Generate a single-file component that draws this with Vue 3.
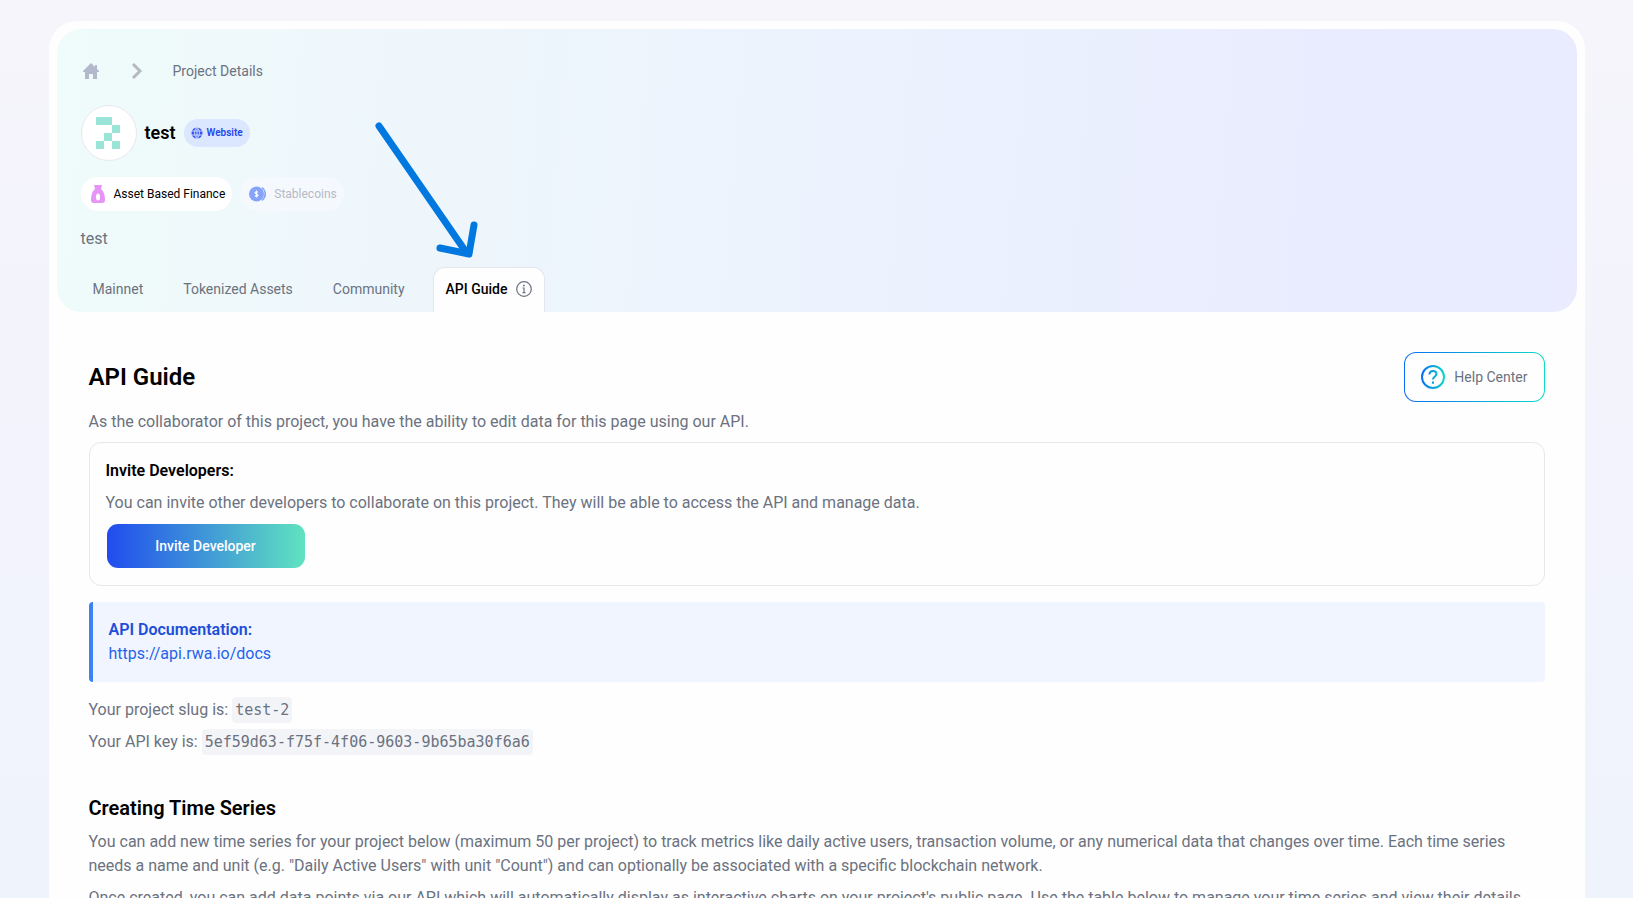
<template>
  <div class="page">
    <main class="card">
      <header class="hero">
        <nav class="breadcrumb" aria-label="Breadcrumb">
          <a href="#" class="home" aria-label="Home">
            <svg width="16" height="16" viewBox="0 0 16 16" fill="#b4b8cc">
              <path d="M8 0 0 8v1h2v7h4v-5h4v5h4V9h2V8l-2-2V2h-2v2z" />
            </svg>
          </a>
          <svg class="chevron" width="16" height="16" viewBox="0 0 16 16" fill="none" stroke="#b6babf" stroke-width="3">
            <path d="m5 1 7 7-7 7" />
          </svg>
          <span>Project Details</span>
        </nav>

        <div class="project">
          <div class="avatar">
            <svg width="26" height="32" viewBox="0 0 26 32" fill="#99e6d8">
              <path d="M0 0h16v8H0zM16 8h8v8h-8zM8 16h8v8H8zM0 24h8v8H0zM16 24h8v8h-8z" />
            </svg>
          </div>
          <h1>{{ project.name }}</h1>
          <a href="#" class="website">
            <svg width="12" height="12" viewBox="0 0 12 12">
              <circle cx="6" cy="6" r="5.500" fill="#3454f0" />
              <path d="M.5 4h11M.5 8h11M6 0v12M6 .5C2.800 3 2.800 9 6 11.500M6 .5c3.200 2.500 3.200 8.500 0 11" fill="none" stroke="#dbe6ff" stroke-width=".9" />
            </svg>
            Website
          </a>
        </div>

        <div class="chips">
          <span class="chip">
            <svg width="16" height="18" viewBox="0 0 16 18">
              <path d="M4 0h8l-1 4 1 1c2 2 3 6 3 10 0 2-1 3-3 3H4c-2 0-3-1-3-3 0-4 1-8 3-10l1-1z" fill="#e694f8" />
              <ellipse cx="8" cy="12" rx="2" ry="3.500" fill="#fff" />
            </svg>
            Asset Based Finance
          </span>
          <span class="chip muted">
            <svg width="17" height="16" viewBox="0 0 17 16">
              <circle cx="7.500" cy="8" r="7.500" fill="#3b6cf6" />
              <path d="M13 1.500c4 3 4 10 0 13M14.500 3c2.500 3 2.500 7 0 10" fill="none" stroke="#3b6cf6" stroke-width="1.200" />
              <path d="M9 6.500c-.5-1-3-1-3 .3s3 1 3 2.400-2.500 1.500-3 .3M7.500 4.500v7" fill="none" stroke="#fff" stroke-width="1.100" />
            </svg>
            Stablecoins
          </span>
        </div>

        <p class="summary">{{ project.description }}</p>

        <nav class="tabs">
          <a v-for="tab in tabs" :key="tab" href="#" class="tab" :class="{ active: tab === activeTab }" @click.prevent="activeTab = tab">
            {{ tab }}
            <svg v-if="tab === 'API Guide'" width="16" height="16" viewBox="0 0 16 16" fill="none" stroke="#6b7280">
              <circle cx="8" cy="8" r="7.300" stroke-width="1.200" />
              <path d="M6.500 7H8v4.500M6.500 11.600h3" stroke-width="1.200" />
              <circle cx="7.900" cy="4.500" r=".9" fill="#6b7280" stroke="none" />
            </svg>
          </a>
        </nav>

        <svg class="pointer" width="104" height="140" viewBox="0 0 104 140" fill="none" stroke="#0078df" stroke-linecap="round" stroke-linejoin="round">
          <path d="m5 5 87 126" stroke-width="7" />
          <path d="m66 127 29 6 5-29" stroke-width="7" />
        </svg>
      </header>

      <section class="content">
        <div class="heading">
          <h2>API Guide</h2>
          <button type="button" class="help">
            <svg width="24" height="24" viewBox="0 0 24 24" fill="none" stroke="url(#helpStroke)" stroke-width="2">
              <defs>
                <linearGradient id="helpStroke" gradientUnits="userSpaceOnUse" x1="0" y1="0" x2="24" y2="0">
                  <stop offset="0" stop-color="#0a6cf5" />
                  <stop offset="1" stop-color="#0bdcc4" />
                </linearGradient>
              </defs>
              <circle cx="12" cy="12" r="11" />
              <path d="M8.500 9.500c0-5 7-4.500 7-.5 0 2.500-3.500 2.500-3.500 5.500M12 16.500v2.200" />
            </svg>
            Help Center
          </button>
        </div>
        <p>As the collaborator of this project, you have the ability to edit data for this page using our API.</p>

        <div class="invite">
          <h4>Invite Developers:</h4>
          <p>You can invite other developers to collaborate on this project. They will be able to access the API and manage data.</p>
          <button type="button" class="invite-btn">Invite Developer</button>
        </div>

        <div class="docs">
          <h4>API Documentation:</h4>
          <a href="https://api.rwa.io/docs">https://api.rwa.io/docs</a>
        </div>

        <p class="key">Your project slug is: <code>{{ project.slug }}</code></p>
        <p class="key">Your API key is: <code>{{ project.apiKey }}</code></p>

        <h3>Creating Time Series</h3>
        <p>You can add new time series for your project below (maximum 50 per project) to track metrics like daily active users, transaction volume, or any numerical data that changes over time. Each time series needs a name and unit (e.g. "Daily Active Users" with unit "Count") and can optionally be associated with a specific blockchain network.</p>
        <p class="more">Once created, you can add data points via our API which will automatically display as interactive charts on your project's public page. Use the table below to manage your time series and view their details.</p>
      </section>
    </main>
  </div>
</template>

<script setup>
import { ref } from 'vue';

const project = ref({
  name: 'test',
  description: 'test',
  slug: 'test-2',
  apiKey: '5ef59d63-f75f-4f06-9603-9b65ba30f6a6'
});

const tabs = ['Mainnet', 'Tokenized Assets', 'Community', 'API Guide'];
const activeTab = ref('API Guide');
</script>

<style>
body {
  margin: 0;
}
</style>

<style scoped>
* {
  box-sizing: border-box;
}
.page {
  height: 100vh;
  overflow-y: auto;
  scrollbar-width: none;
  padding: 21px 48px 0;
  background: linear-gradient(180deg, #f6f5fb 0%, #f3f3fd 50%, #eff3fc 100%);
  color: #6b7280;
  font-family: Roboto, "Liberation Sans", sans-serif;
  font-size: 16px;
  line-height: 24px;
}
h1, h2, h3, h4, p {
  margin: 0;
}
a {
  text-decoration: none;
}
svg {
  flex: none;
}
.card {
  max-width: 1536px;
  margin: 0 auto;
  padding: 8px 8px 40px;
  background: #fefefe;
  border-radius: 28px 28px 0 0;
}
.hero {
  position: relative;
  padding: 32px 24px 0;
  border-radius: 24px;
  background: linear-gradient(95deg, #effcfa 0%, #eff8fb 14%, #edf5fc 32%, #ebf1fe 60%, #e9ecfe 85%, #eaebff 100%);
}
.breadcrumb {
  display: flex;
  align-items: center;
  height: 20px;
  padding-left: 2px;
  font-size: 14px;
}
.home {
  display: flex;
}
.chevron {
  margin: 0 29px;
}
.project {
  display: flex;
  align-items: center;
  margin-top: 24px;
}
.avatar {
  display: flex;
  align-items: center;
  justify-content: center;
  width: 56px;
  height: 56px;
  margin-right: 8px;
  border: 1px solid #e8e8f0;
  border-radius: 50%;
  background: #fff;
}
h1 {
  color: #000;
  font-size: 18px;
  font-weight: 600;
}
.website {
  display: flex;
  align-items: center;
  gap: 4px;
  height: 28px;
  margin-left: 8px;
  padding: 0 7px;
  border-radius: 14px;
  background: #dbe6ff;
  color: #2346ea;
  font-size: 10px;
  font-weight: 600;
}
.chips {
  display: flex;
  gap: 8px;
  margin-top: 16px;
}
.chip {
  display: flex;
  align-items: center;
  gap: 8px;
  height: 34px;
  padding: 0 7px 0 9px;
  border-radius: 17px;
  background: #fff;
  color: #000;
  font-size: 12px;
}
.chip.muted {
  background: #f5f9fe;
  color: #b5b9c5;
}
.chip.muted svg {
  opacity: 0.6;
}
.summary {
  margin-top: 16px;
}
.tabs {
  display: flex;
  gap: 16px;
  margin-top: 16px;
}
.tab {
  display: flex;
  align-items: center;
  gap: 8px;
  height: 45px;
  padding: 0 12px 2px;
  color: #6b7280;
  font-size: 14px;
}
.tab.active {
  border: 1px solid #e5e5ee;
  border-bottom: none;
  border-radius: 12px 12px 0 0;
  background: #fefefe;
  color: #000;
  font-weight: 500;
}
.pointer {
  position: absolute;
  top: 92px;
  left: 317px;
}
.content {
  padding: 40px 32px 0;
}
.heading {
  display: flex;
  align-items: center;
  justify-content: space-between;
  margin-bottom: 8px;
}
h2 {
  color: #000;
  font-size: 24px;
  font-weight: 600;
  line-height: 32px;
}
.help {
  display: flex;
  align-items: center;
  gap: 9px;
  height: 50px;
  padding: 0 16px;
  border: 1px solid transparent;
  border-radius: 12px;
  background: linear-gradient(#fefefe, #fefefe) padding-box, linear-gradient(90deg, #0a6cf5, #0bdcc4) border-box;
  color: #6b7280;
  font: 14px Roboto, "Liberation Sans", sans-serif;
}
.invite {
  margin: 8px 0 16px;
  padding: 16px;
  border: 1px solid #e5e7eb;
  border-radius: 12px;
}
h4 {
  color: #000;
  font-size: 16px;
  font-weight: 600;
}
.invite p {
  margin: 8px 0;
}
.invite-btn {
  display: block;
  width: 200px;
  height: 46px;
  border: 1px solid transparent;
  border-radius: 12px;
  background: linear-gradient(90deg, #204cee, #60e3c0) padding-box;
  color: #fff;
  font: 500 14px Roboto, "Liberation Sans", sans-serif;
}
.docs {
  margin-bottom: 12px;
  padding: 16px;
  border-left: 4px solid #3b82f6;
  border-radius: 4px;
  background: #f0f5ff;
}
.docs h4 {
  color: #1d4ed8;
}
.docs a {
  color: #2563eb;
}
.key {
  line-height: 32px;
}
.key code {
  padding: 4px 3px;
  border-radius: 4px;
  background: #f3f4f8;
  font-family: "DejaVu Sans Mono", monospace;
  font-size: 15px;
}
h3 {
  margin: 36px 0 8px;
  color: #000;
  font-size: 20px;
  font-weight: 600;
  line-height: 28px;
}
.more {
  margin-top: 8px;
}
</style>
